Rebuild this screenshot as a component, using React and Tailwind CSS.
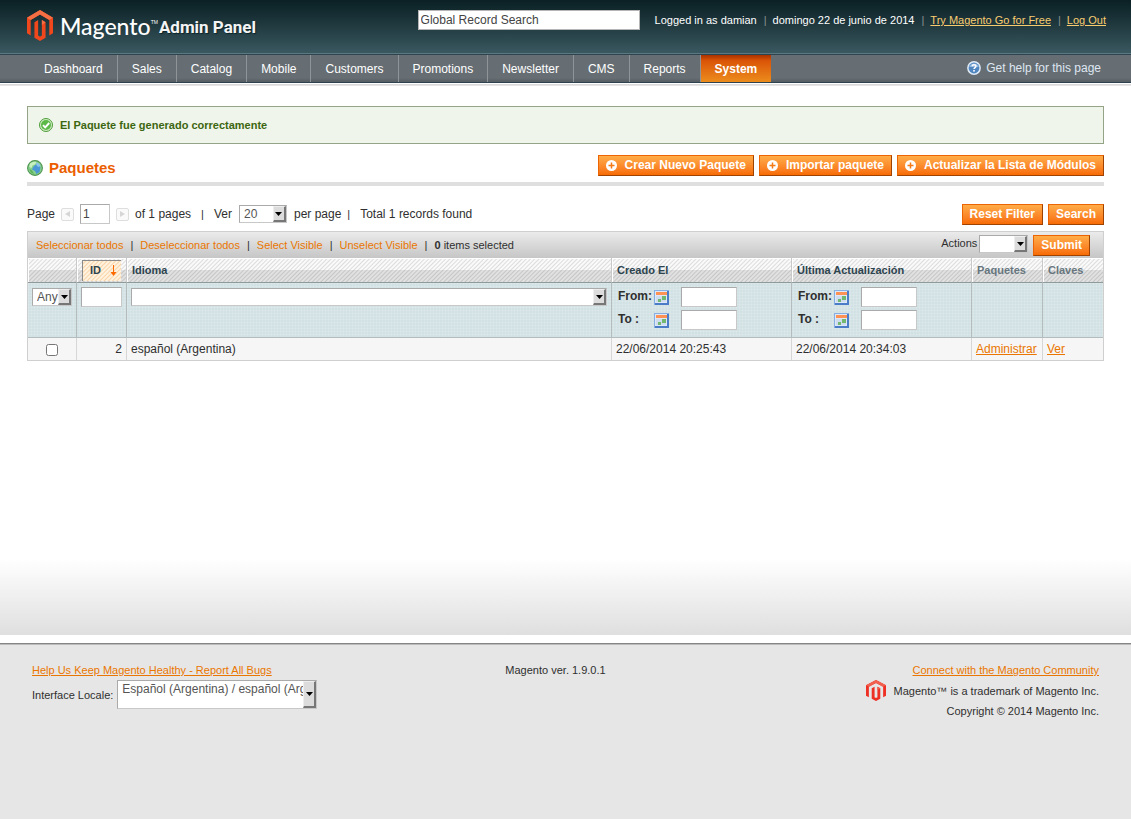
import React, { useState } from "react";

const navItems = [
  "Dashboard",
  "Sales",
  "Catalog",
  "Mobile",
  "Customers",
  "Promotions",
  "Newsletter",
  "CMS",
  "Reports",
];

const massLinks = [
  "Seleccionar todos",
  "Deseleccionar todos",
  "Select Visible",
  "Unselect Visible",
];

const packages = [
  {
    id: 2,
    idioma: "español (Argentina)",
    creado: "22/06/2014 20:25:43",
    actualizado: "22/06/2014 20:34:03",
  },
];

const MagentoMark = ({ className, base, light }) => (
  <svg viewBox="1.6 0 20.8 24" className={className} preserveAspectRatio="none" aria-hidden="true">
    <path
      fill={base}
      d="M12 24l-4.455-2.572v-12l2.97-1.715v12.001l1.485.902 1.485-.902V7.713l2.971 1.715v12L12 24zM22.391 6.003v12l-2.969 1.714V7.713L12 3.43 4.574 7.713v12.004l-2.97-1.714v-12L12.001 0l10.39 6.003z"
    />
    <path fill={light} d="M12 0L22.39 6.003 19.42 7.713 12 3.43 4.574 7.713 1.604 6.003z" />
    <path fill={light} d="M13.485 7.713l2.971 1.715-2.971 2.2z" />
  </svg>
);

const HelpIcon = () => (
  <svg viewBox="0 0 14 14" className="size-3.5" aria-hidden="true">
    <circle cx="7" cy="7" r="6.9" fill="#dfeaf6" />
    <circle cx="7" cy="7" r="5.4" fill="#4f86c0" />
    <path d="M2.2 6a5 5 0 0 1 9.6 0z" fill="#8fb6dd" />
    <path
      d="M5.1 5.3C5.2 3.2 8.9 3.2 8.9 5.3 8.9 6.6 7 6.5 7 8"
      fill="none"
      stroke="#fff"
      strokeWidth="1.5"
    />
    <rect x="6.2" y="9" width="1.6" height="1.6" fill="#fff" />
  </svg>
);

const SuccessIcon = () => (
  <svg viewBox="0 0 14 14" className="size-3.5 shrink-0" aria-hidden="true">
    <circle cx="7" cy="7" r="6.5" fill="#cfeec4" stroke="#4f9b3a" />
    <circle cx="7" cy="7" r="5" fill="#5cb947" />
    <path d="M4 7.2l2.2 2.2 4-4.4" fill="none" stroke="#fff" strokeWidth="1.9" />
  </svg>
);

const GlobeIcon = () => (
  <svg viewBox="0 0 16 16" className="size-4" aria-hidden="true">
    <circle cx="8" cy="8" r="7.4" fill="#86cf8c" stroke="#4d9450" strokeWidth="1.1" />
    <path d="M3 3.500C5 1.500 8 1.500 9.500 2L8 4.500 5.500 5.500 4.500 8 2.200 7z" fill="#c8efbe" />
    <path d="M7.500 5.500L11 4l2.500 3.500-1 4.500-3 2-1.500-3-3-1.500 1-2z" fill="#4a96d6" />
    <path d="M9 2.500l3 1 1.500 2.500-2.500 1-1.500-2z" fill="#8cc4ef" />
    <path d="M2.500 9l2.500 1.500 2 3.500A6 6 0 0 1 2.500 9z" fill="#5cb15a" />
  </svg>
);

const PlusIcon = () => (
  <svg viewBox="0 0 11 11" className="size-[11px]" aria-hidden="true">
    <circle cx="5.5" cy="5.5" r="5.5" fill="#fff" />
    <path d="M5.5 2.500v6M2.500 5.500h6" stroke="#f37a14" strokeWidth="1.5" />
  </svg>
);

const CalendarIcon = () => (
  <svg viewBox="0 0 15 15" className="size-[15px]" aria-hidden="true">
    <rect x=".5" y=".5" width="14" height="14" fill="#dfe8f6" stroke="#86aee0" />
    <path d="M14 1v13H1" fill="none" stroke="#4a7cc8" strokeWidth="2" />
    <rect x="2" y="2" width="11" height="3" fill="#fd9254" />
    <rect x="2" y="6" width="10" height="6" fill="#cfdcf0" />
    <rect x="8" y="6" width="4" height="4" fill="#72b86e" />
    <rect x="4" y="9" width="3" height="3" fill="#72b86e" />
  </svg>
);

const PageArrow = ({ label, path }) => (
  <button
    aria-label={label}
    className="flex size-[13px] items-center justify-center rounded-xs border border-[#dedede] bg-[#fafafa]"
  >
    <svg viewBox="0 0 5 6" className="h-1.5 w-[5px]" aria-hidden="true">
      <path d={path} fill="#d6d6d6" />
    </svg>
  </button>
);

const Button = ({ icon, children }) => (
  <button className="flex h-[21px] items-center gap-2 border border-t-[#ed6502] border-r-[#a04300] border-b-[#a04300] border-l-[#ed6502] bg-linear-to-b from-[#ffac47] to-[#f76b02] px-[7px] text-xs font-bold whitespace-nowrap text-white">
    {icon && <PlusIcon />}
    <span className="pb-0.5 leading-4">{children}</span>
  </button>
);

const Select = ({ id, label, className, textClass = "items-center", children }) => (
  <div className={`relative border border-t-[#aaa] border-r-[#c8c8c8] border-b-[#c8c8c8] border-l-[#aaa] bg-white ${className}`}>
    <select
      id={id}
      aria-label={label}
      className={`block size-full appearance-none pr-3 pl-1 text-xs text-[#555] outline-none ${textClass}`}
    >
      {children}
    </select>
    <span className="pointer-events-none absolute inset-y-0 right-0 flex w-[13px] items-center justify-center border-t border-r-2 border-b-2 border-l border-t-[#eee] border-r-[#777] border-b-[#777] border-l-[#eee] bg-[#dcdcdc]">
      <svg viewBox="0 0 7 4" className="h-1 w-[7px]" aria-hidden="true">
        <path d="M0 0h7L3.5 4z" fill="#000" />
      </svg>
    </span>
  </div>
);

const TextInput = ({ className = "", ...props }) => (
  <input
    type="text"
    className={`block h-5 border border-t-[#aaa] border-r-[#c8c8c8] border-b-[#c8c8c8] border-l-[#aaa] bg-white px-0.5 text-xs text-[#444] outline-none ${className}`}
    {...props}
  />
);

const DateRange = ({ name }) => (
  <div className="flex flex-col gap-[3px] pl-0.5">
    {["From:", "To :"].map((label) => (
      <div key={label} className="flex items-center">
        <label htmlFor={`${name}-${label}`} className="w-9 pb-0.5 leading-4 font-bold">
          {label}
        </label>
        <CalendarIcon />
        <TextInput id={`${name}-${label}`} className="ml-3 w-14" />
      </div>
    ))}
  </div>
);

const Header = () => (
  <header className="flex min-h-[54px] items-start justify-between border-b border-[#5b7780] bg-linear-to-b from-[#0a2024] to-[#3a5860] pt-2.5 pr-[25px] pl-[27px]">
    <div className="flex items-start">
      <MagentoMark className="h-[31px] w-[26px]" base="#f1471d" light="#f47044" />
      <span className="ml-[7px] font-['Lato',sans-serif] text-[23px] leading-8 font-medium text-white">Magento</span>
      <span className="pt-1.5 text-[5px] leading-3 text-white">TM</span>
      <span className="ml-px font-['Roboto',sans-serif] text-[17px] leading-[34px] font-bold whitespace-nowrap text-[#f4f4f4] [text-shadow:1px_1px_1px_#0b2429]">
        Admin Panel
      </span>
    </div>
    <div className="flex items-center gap-[15px] text-[11px] leading-5 whitespace-nowrap text-white">
      <input
        type="text"
        aria-label="Global Record Search"
        defaultValue="Global Record Search"
        className="h-5 w-[222px] border border-[#b5b5b5] bg-white px-0.5 text-xs text-[#444] outline-none"
      />
      <div className="flex">
        <span>Logged in as damian</span>
        <span className="mr-1.5 ml-[7px] text-[#8a9290]">|</span>
        <span>domingo 22 de junio de 2014</span>
        <span className="mr-1.5 ml-[7px] text-[#8a9290]">|</span>
        <a href="#go" className="text-[#f9cc70] underline">Try Magento Go for Free</a>
        <span className="mr-1.5 ml-[7px] text-[#8a9290]">|</span>
        <a href="#logout" className="text-[#f9cc70] underline">Log Out</a>
      </div>
    </div>
  </header>
);

const Nav = () => (
  <nav className="border-b border-[#e6e6e6] bg-white">
    <div className="border-b border-[#dadada] pb-px">
      <div className="flex justify-between border-y border-[#2d444f] bg-linear-to-b from-[#666e73] from-85% to-[#565d62] px-[30px] text-xs leading-7 text-white">
        <ul className="flex">
          {navItems.map((item) => (
            <li key={item} className="border-r border-[#8e9498]">
              <a href={`#${item}`} className="block h-[27px] px-3.5">{item}</a>
            </li>
          ))}
          <li>
            <a
              href="#System"
              className="block h-[27px] bg-linear-to-b from-[#a83200] via-[#d95307] via-20% to-[#ec8c1c] px-3.5 font-bold"
            >
              System
            </a>
          </li>
        </ul>
        <a href="#help" className="flex h-[25px] items-center gap-[5px] text-[#dfe6f2]">
          <HelpIcon />
          Get help for this page
        </a>
      </div>
    </div>
  </nav>
);

const thBase =
  "h-[25px] border-r border-r-[#c9c9c9] border-b border-b-[#8f9a9a] px-[5px] text-left text-[11px] font-bold [box-shadow:inset_1px_1px_0_#fff] last:border-r-0";
const tdFilter = "border-r border-b border-[#b4bcbe] px-1 pt-1 pb-[7px] align-top last:border-r-0";
const tdData = "h-[22px] border-r border-[#d6d6d6] px-1 last:border-r-0";

const Grid = () => {
  const [selected, setSelected] = useState([]);

  const toggle = (id) => {
    setSelected((prev) =>
      prev.includes(id) ? prev.filter((x) => x !== id) : [...prev, id]
    );
  };

  return (
    <div className="border border-[#cfcfcf]">
      <div className="flex items-start justify-between bg-linear-to-b from-[#ebebeb] to-[#c6c6c6] pt-[3px] pr-[13px] pb-0.5 pl-2 text-[11px]">
        <div className="flex gap-[7px] pt-0.5 leading-4">
          {massLinks.map((link) => (
            <React.Fragment key={link}>
              <a href={`#${link}`} className="text-[#ea7601]">{link}</a>
              <span>|</span>
            </React.Fragment>
          ))}
          <span><b>{selected.length}</b> items selected</span>
        </div>
        <div className="flex items-start">
          <label htmlFor="mass-action" className="mr-0.5 leading-4">Actions</label>
          <Select id="mass-action" className="mr-[5px] h-[18px] w-[49px]">
            <option value=""></option>
            <option value="delete">Eliminar</option>
          </Select>
          <Button>Submit</Button>
        </div>
      </div>

      <table className="w-full table-fixed border-separate border-spacing-0 text-xs">
        <colgroup>
          <col className="w-[49px]" />
          <col className="w-[50px]" />
          <col />
          <col className="w-[180px]" />
          <col className="w-[180px]" />
          <col className="w-[71px]" />
          <col className="w-[60px]" />
        </colgroup>
        <thead className="bg-[linear-gradient(to_bottom,transparent_50%,#0000001a_50%),repeating-linear-gradient(135deg,#fafafa_0px,#fafafa_1px,#dcdcdc_2px,#fafafa_3px)] text-[#2d444f]">
          <tr>
            <th className={thBase}></th>
            <th className={`${thBase} py-0`}>
              <a
                href="#id"
                className="flex h-[21px] items-center justify-between border-t border-l border-[#8a8a8a] bg-[repeating-linear-gradient(135deg,#fff3e0_0px,#fff3e0_1px,#f9d3a8_2px,#fff3e0_3px)] pr-1 pl-[7px]"
              >
                ID
                <svg viewBox="0 0 7 11" className="h-[11px] w-[7px]" aria-hidden="true">
                  <path d="M3 0h1v7h2.500L3.500 11 .5 7H3z" fill="#ff6a00" />
                </svg>
              </a>
            </th>
            <th className={thBase}>Idioma</th>
            <th className={thBase}>Creado El</th>
            <th className={thBase}>Última Actualización</th>
            <th className={`${thBase} text-[#67767e]`}>Paquetes</th>
            <th className={`${thBase} text-[#67767e]`}>Claves</th>
          </tr>
        </thead>
        <tbody>
          <tr className="bg-[#d2e1e4] bg-[repeating-linear-gradient(to_right,#ffffff22_0px,#ffffff22_1px,transparent_1px,transparent_3px),repeating-linear-gradient(to_bottom,#ffffff22_0px,#ffffff22_1px,transparent_1px,transparent_3px)]">
            <td className={tdFilter}>
              <Select label="Any" className="mt-px h-[18px] w-10">
                <option>Any</option>
                <option>Yes</option>
                <option>No</option>
              </Select>
            </td>
            <td className={tdFilter}>
              <TextInput aria-label="ID" className="w-full" />
            </td>
            <td className={tdFilter}>
              <Select label="Idioma" className="mt-px h-[18px] w-full">
                <option value=""></option>
                <option value="es_AR">español (Argentina)</option>
              </Select>
            </td>
            <td className={tdFilter}><DateRange name="creado" /></td>
            <td className={tdFilter}><DateRange name="actualizado" /></td>
            <td className={tdFilter}></td>
            <td className={tdFilter}></td>
          </tr>
          {packages.map((p) => (
            <tr key={p.id} className="bg-[#f6f6f6]">
              <td className={tdData}>
                <input
                  type="checkbox"
                  aria-label={`Select ${p.id}`}
                  checked={selected.includes(p.id)}
                  onChange={() => toggle(p.id)}
                  className="mx-auto mt-0.5 block size-3"
                />
              </td>
              <td className={`${tdData} text-right`}>{p.id}</td>
              <td className={tdData}>{p.idioma}</td>
              <td className={tdData}>{p.creado}</td>
              <td className={tdData}>{p.actualizado}</td>
              <td className={tdData}>
                <a href="#administrar" className="text-[#ea7601] underline">Administrar</a>
              </td>
              <td className={tdData}>
                <a href="#ver" className="text-[#ea7601] underline">Ver</a>
              </td>
            </tr>
          ))}
        </tbody>
      </table>
    </div>
  );
};

const Footer = () => (
  <footer className="grow border-t border-[#858585] bg-[#e6e6e6] px-8 pt-4 text-[11px] leading-5 [box-shadow:inset_0_1px_0_#bcbcbc]">
    <div className="grid grid-cols-3">
      <div>
        <a href="#bugs" className="block whitespace-nowrap text-[#ea7601] underline">
          Help Us Keep Magento Healthy - Report All Bugs
        </a>
        <div className="flex items-center gap-1">
          <label htmlFor="locale" className="whitespace-nowrap">Interface Locale:</label>
          <Select id="locale" className="h-[29px] w-[200px]" textClass="pb-3">
            <option>Español (Argentina) / español (Argentina)</option>
          </Select>
        </div>
      </div>
      <p className="pr-5 text-center">Magento ver. 1.9.0.1</p>
      <div className="flex flex-col items-end">
        <a href="#community" className="text-[#ea7601] underline">
          Connect with the Magento Community
        </a>
        <p className="flex items-center gap-2 whitespace-nowrap">
          <MagentoMark className="h-[21px] w-5" base="#ee2f24" light="#f2604f" />
          Magento™ is a trademark of Magento Inc.
        </p>
        <p>Copyright © 2014 Magento Inc.</p>
      </div>
    </div>
  </footer>
);

const App = () => {
  return (
    <div className="flex min-h-screen flex-col bg-white font-['Liberation_Sans',Arial,sans-serif] text-xs text-[#2f2f2f]">
      <Header />
      <Nav />

      <main className="mb-2 min-h-[549px] bg-[linear-gradient(to_top,#dfdfdf,#fff_76px)] px-[27px] pt-5">
        <div className="flex gap-[7px] border border-[#95a486] bg-[#eff5ea] p-[11px] text-[11px] leading-[14px] font-bold text-[#3d6611]">
          <SuccessIcon />
          El Paquete fue generado correctamente
        </div>

        <div className="mt-[11px] flex items-start justify-between border-b-4 border-[#dfdfdf] pb-1">
          <h1 className="flex items-center gap-1.5 pt-[3px] text-[15px] leading-5 font-bold text-[#eb5e00]">
            <GlobeIcon />
            Paquetes
          </h1>
          <div className="flex gap-[5px]">
            <Button icon>Crear Nuevo Paquete</Button>
            <Button icon>Importar paquete</Button>
            <Button icon>Actualizar la Lista de Módulos</Button>
          </div>
        </div>

        <div className="mt-[18px] mb-1.5 flex items-start justify-between">
          <div className="flex h-5 items-center gap-1.5">
            <label htmlFor="page">Page</label>
            <PageArrow label="Previous page" path="M5 0v6L0 3z" />
            <TextInput id="page" defaultValue="1" className="w-[30px]" />
            <PageArrow label="Next page" path="M0 0v6l5-3z" />
            <span>of 1 pages</span>
            <span className="mx-1 text-[11px]">|</span>
            <label htmlFor="limit">Ver</label>
            <Select id="limit" className="mx-px h-[18px] w-12">
              <option>20</option>
              <option>50</option>
            </Select>
            <span>per page</span>
            <span className="mr-1 text-[11px]">|</span>
            <span>Total 1 records found</span>
          </div>
          <div className="flex gap-[5px]">
            <Button>Reset Filter</Button>
            <Button>Search</Button>
          </div>
        </div>

        <Grid />
      </main>

      <Footer />
    </div>
  );
};

export default App;
